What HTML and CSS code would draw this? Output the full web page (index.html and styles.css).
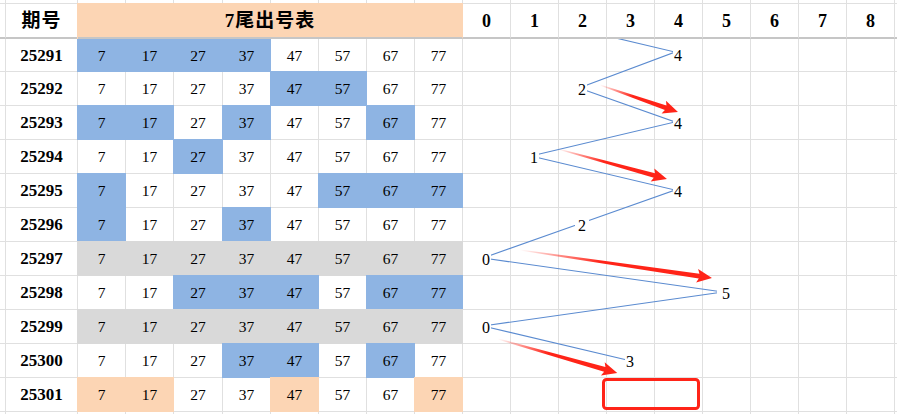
FILE: index.html
```html
<!DOCTYPE html>
<html lang="zh">
<head>
<meta charset="utf-8">
<title>7尾出号表</title>
<link rel="stylesheet" href="styles.css">
</head>
<body>
<div class="sheet">
  <div class="grid">
    <div class="row cut">
      <div class="c"></div><div class="c"></div><div class="c"></div><div class="c"></div><div class="c"></div><div class="c"></div><div class="c"></div><div class="c"></div><div class="c"></div><div class="c"></div><div class="c"></div><div class="c"></div><div class="c"></div><div class="c"></div><div class="c"></div><div class="c"></div><div class="c"></div><div class="c"></div><div class="c"></div><div class="c"></div>
    </div>
    <div class="row head">
      <div class="c"></div>
      <div class="c title">期号</div>
      <div class="c title o span8">7尾出号表</div>
      <div class="c hd">0</div><div class="c hd">1</div><div class="c hd">2</div><div class="c hd">3</div><div class="c hd">4</div><div class="c hd">5</div><div class="c hd">6</div><div class="c hd">7</div><div class="c hd">8</div>
      <div class="c"></div>
    </div>
    <div class="row first">
      <div class="c"></div><div class="c id">25291</div>
      <div class="c n b">7</div><div class="c n b">17</div><div class="c n b">27</div><div class="c n b">37</div><div class="c n">47</div><div class="c n">57</div><div class="c n">67</div><div class="c n">77</div>
      <div class="c"></div><div class="c"></div><div class="c"></div><div class="c"></div><div class="c"></div><div class="c"></div><div class="c"></div><div class="c"></div><div class="c"></div><div class="c"></div>
    </div>
    <div class="row">
      <div class="c"></div><div class="c id">25292</div>
      <div class="c n">7</div><div class="c n">17</div><div class="c n">27</div><div class="c n">37</div><div class="c n b">47</div><div class="c n b">57</div><div class="c n">67</div><div class="c n">77</div>
      <div class="c"></div><div class="c"></div><div class="c"></div><div class="c"></div><div class="c"></div><div class="c"></div><div class="c"></div><div class="c"></div><div class="c"></div><div class="c"></div>
    </div>
    <div class="row">
      <div class="c"></div><div class="c id">25293</div>
      <div class="c n b">7</div><div class="c n b">17</div><div class="c n">27</div><div class="c n b">37</div><div class="c n">47</div><div class="c n">57</div><div class="c n b">67</div><div class="c n">77</div>
      <div class="c"></div><div class="c"></div><div class="c"></div><div class="c"></div><div class="c"></div><div class="c"></div><div class="c"></div><div class="c"></div><div class="c"></div><div class="c"></div>
    </div>
    <div class="row">
      <div class="c"></div><div class="c id">25294</div>
      <div class="c n">7</div><div class="c n">17</div><div class="c n b">27</div><div class="c n">37</div><div class="c n">47</div><div class="c n">57</div><div class="c n">67</div><div class="c n">77</div>
      <div class="c"></div><div class="c"></div><div class="c"></div><div class="c"></div><div class="c"></div><div class="c"></div><div class="c"></div><div class="c"></div><div class="c"></div><div class="c"></div>
    </div>
    <div class="row">
      <div class="c"></div><div class="c id">25295</div>
      <div class="c n b">7</div><div class="c n">17</div><div class="c n">27</div><div class="c n">37</div><div class="c n">47</div><div class="c n b">57</div><div class="c n b">67</div><div class="c n b">77</div>
      <div class="c"></div><div class="c"></div><div class="c"></div><div class="c"></div><div class="c"></div><div class="c"></div><div class="c"></div><div class="c"></div><div class="c"></div><div class="c"></div>
    </div>
    <div class="row">
      <div class="c"></div><div class="c id">25296</div>
      <div class="c n b">7</div><div class="c n">17</div><div class="c n">27</div><div class="c n b">37</div><div class="c n">47</div><div class="c n">57</div><div class="c n">67</div><div class="c n">77</div>
      <div class="c"></div><div class="c"></div><div class="c"></div><div class="c"></div><div class="c"></div><div class="c"></div><div class="c"></div><div class="c"></div><div class="c"></div><div class="c"></div>
    </div>
    <div class="row">
      <div class="c"></div><div class="c id">25297</div>
      <div class="c n g">7</div><div class="c n g">17</div><div class="c n g">27</div><div class="c n g">37</div><div class="c n g">47</div><div class="c n g">57</div><div class="c n g">67</div><div class="c n g">77</div>
      <div class="c"></div><div class="c"></div><div class="c"></div><div class="c"></div><div class="c"></div><div class="c"></div><div class="c"></div><div class="c"></div><div class="c"></div><div class="c"></div>
    </div>
    <div class="row">
      <div class="c"></div><div class="c id">25298</div>
      <div class="c n">7</div><div class="c n">17</div><div class="c n b">27</div><div class="c n b">37</div><div class="c n b">47</div><div class="c n">57</div><div class="c n b">67</div><div class="c n b">77</div>
      <div class="c"></div><div class="c"></div><div class="c"></div><div class="c"></div><div class="c"></div><div class="c"></div><div class="c"></div><div class="c"></div><div class="c"></div><div class="c"></div>
    </div>
    <div class="row">
      <div class="c"></div><div class="c id">25299</div>
      <div class="c n g">7</div><div class="c n g">17</div><div class="c n g">27</div><div class="c n g">37</div><div class="c n g">47</div><div class="c n g">57</div><div class="c n g">67</div><div class="c n g">77</div>
      <div class="c"></div><div class="c"></div><div class="c"></div><div class="c"></div><div class="c"></div><div class="c"></div><div class="c"></div><div class="c"></div><div class="c"></div><div class="c"></div>
    </div>
    <div class="row">
      <div class="c"></div><div class="c id">25300</div>
      <div class="c n">7</div><div class="c n">17</div><div class="c n">27</div><div class="c n b">37</div><div class="c n b">47</div><div class="c n">57</div><div class="c n b">67</div><div class="c n">77</div>
      <div class="c"></div><div class="c"></div><div class="c"></div><div class="c"></div><div class="c"></div><div class="c"></div><div class="c"></div><div class="c"></div><div class="c"></div><div class="c"></div>
    </div>
    <div class="row">
      <div class="c"></div><div class="c id">25301</div>
      <div class="c n o">7</div><div class="c n o">17</div><div class="c n">27</div><div class="c n">37</div><div class="c n o">47</div><div class="c n">57</div><div class="c n">67</div><div class="c n o">77</div>
      <div class="c"></div><div class="c"></div><div class="c"></div><div class="c"></div><div class="c"></div><div class="c"></div><div class="c"></div><div class="c"></div><div class="c"></div><div class="c"></div>
    </div>
    <div class="row cut">
      <div class="c"></div><div class="c"></div><div class="c"></div><div class="c"></div><div class="c"></div><div class="c"></div><div class="c"></div><div class="c"></div><div class="c"></div><div class="c"></div><div class="c"></div><div class="c"></div><div class="c"></div><div class="c"></div><div class="c"></div><div class="c"></div><div class="c"></div><div class="c"></div><div class="c"></div><div class="c"></div>
    </div>
  </div>

  <svg class="chart" width="897" height="414" viewBox="0 0 897 414" xmlns="http://www.w3.org/2000/svg">
    <defs>
      <clipPath id="plot"><rect x="0" y="39" width="897" height="375"/></clipPath>
      <linearGradient id="fade" x1="0" y1="0" x2="1" y2="0">
        <stop offset="0" stop-color="#ff2418" stop-opacity="0"/>
        <stop offset="0.22" stop-color="#ff2418" stop-opacity="0.55"/>
        <stop offset="0.42" stop-color="#ff2418" stop-opacity="1"/>
        <stop offset="1" stop-color="#ff2418" stop-opacity="1"/>
      </linearGradient>
    </defs>
    <g clip-path="url(#plot)">
      <polyline class="trend" points="531,18 675,52 579,88 675,122 531,156 675,190 579,224 483,258 723,292 483,326 627,360"/>
    </g>
    <g class="labels">
      <rect x="673" y="48" width="10" height="15"/><text x="678" y="61">4</text>
      <rect x="577" y="82" width="10" height="15"/><text x="582" y="95">2</text>
      <rect x="673" y="116" width="10" height="15"/><text x="678" y="129">4</text>
      <rect x="529" y="150" width="10" height="15"/><text x="534" y="163">1</text>
      <rect x="673" y="184" width="10" height="15"/><text x="678" y="197">4</text>
      <rect x="575" y="218" width="14" height="15"/><text x="582" y="231">2</text>
      <rect x="481" y="252" width="10" height="15"/><text x="486" y="265">0</text>
      <rect x="717" y="286" width="14" height="15"/><text x="726" y="299">5</text>
      <rect x="481" y="320" width="10" height="15"/><text x="486" y="333">0</text>
      <rect x="625" y="354" width="10" height="15"/><text x="630" y="367">3</text>
    </g>
    <g class="arrows">
      <path transform="translate(600 85) rotate(19.1)" d="M0,-0.6 L69.5,-2.4 L67.5,-6.8 L82.5,0 L67.5,6.8 L69.5,2.4 L0,0.6 Z"/>
      <path transform="translate(558 149) rotate(15.4)" d="M0,-0.6 L100,-2.4 L98,-6.8 L113,0 L98,6.8 L100,2.4 L0,0.6 Z"/>
      <path transform="translate(520 250) rotate(8.3)" d="M0,-0.6 L181,-2.4 L179,-6.8 L194,0 L179,6.8 L181,2.4 L0,0.6 Z"/>
      <path transform="translate(498 339) rotate(15.9)" d="M0,-0.6 L111,-2.4 L109,-6.8 L124,0 L109,6.8 L111,2.4 L0,0.6 Z"/>
    </g>
    <rect class="target" x="603.5" y="379.5" width="95" height="29" rx="3" ry="3"/>
  </svg>
</div>
</body>
</html>
```

FILE: styles.css
```css
html, body {
  margin: 0;
  padding: 0;
  background: #ffffff;
}

body {
  width: 897px;
  height: 414px;
  overflow: hidden;
}

.sheet {
  position: relative;
  width: 897px;
  height: 414px;
  overflow: hidden;
}

.grid {
  display: grid;
  grid-template-columns: 6px 72px 48px 48px 49px repeat(5, 48px) repeat(9, 48px) 48px;
  grid-template-rows: 4px 35px 33px repeat(10, 34px) 20px;
  width: max-content;
  font-family: "Liberation Serif", "Noto Sans CJK SC", serif;
  color: #000;
}

.row {
  display: contents;
}

.c {
  box-sizing: border-box;
  border-right: 1px solid #e0e0e0;
  border-bottom: 1px solid #e0e0e0;
  display: flex;
  align-items: center;
  justify-content: center;
  background: #fff;
  font-size: 15px;
  line-height: 1;
}

.head .c {
  border-bottom: 2px solid #c6c6c6;
}

.title {
  font-family: "Liberation Serif", "Noto Sans CJK SC", serif;
  font-weight: 700;
  font-size: 19px;
  letter-spacing: 1px;
}

.span8 {
  grid-column: span 8;
}

.hd {
  font-weight: 700;
  font-size: 18px;
}

.id {
  font-weight: 700;
  font-size: 17px;
}

.n {
  font-size: 15.5px;
  padding-top: 1px;
}

.b {
  background: #8eb4e3;
  border-right-color: #8eb4e3;
  border-bottom-color: #8eb4e3;
  box-shadow: -1px 0 0 #8eb4e3, 0 -1px 0 #8eb4e3, -1px -1px 0 #8eb4e3;
}

.g {
  background: #d9d9d9;
  border-right-color: #d9d9d9;
  border-bottom-color: #d9d9d9;
  box-shadow: -1px 0 0 #d9d9d9, 0 -1px 0 #d9d9d9, -1px -1px 0 #d9d9d9;
}

.o {
  background: #fcd5b4;
  border-right-color: #fcd5b4;
  border-bottom-color: #fcd5b4;
  box-shadow: -1px 0 0 #fcd5b4, 0 -1px 0 #fcd5b4, -1px -1px 0 #fcd5b4;
}

.head .o {
  border-bottom-color: #c6c6c6;
}

.first .b {
  box-shadow: -1px 0 0 #8eb4e3;
}

.chart {
  position: absolute;
  left: 0;
  top: 0;
  pointer-events: none;
}

.trend {
  fill: none;
  stroke: #5b8bd0;
  stroke-width: 1.1;
}

.labels rect {
  fill: #ffffff;
}

.labels text {
  font-family: "Liberation Serif", serif;
  font-size: 16px;
  text-anchor: middle;
  fill: #000;
}

.arrows path {
  fill: url(#fade);
}

.target {
  fill: none;
  stroke: #ff2418;
  stroke-width: 3;
}
```
